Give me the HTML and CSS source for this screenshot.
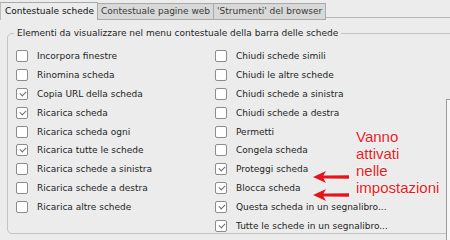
FILE: index.html
```html
<!DOCTYPE html>
<html lang="it">
<head>
  <meta charset="UTF-8" />
  <title>Contestuale schede</title>
  <link rel="stylesheet" href="styles.css">
</head>
<body>
  <div class="tabs">
    <div class="tab active">Contestuale schede</div>
    <div class="tab">Contestuale pagine web</div>
    <div class="tab">'Strumenti' del browser</div>
    <div class="tab-rest"></div>
  </div>

  <div class="panel">
    <fieldset class="group">
      <legend>Elementi da visualizzare nel menu contestuale della barra delle schede</legend>
      <div class="columns">
        <div class="col">
          <label class="item"><span class="box"></span>Incorpora finestre</label>
          <label class="item"><span class="box"></span>Rinomina scheda</label>
          <label class="item"><span class="box checked"></span>Copia URL della scheda</label>
          <label class="item"><span class="box checked"></span>Ricarica scheda</label>
          <label class="item"><span class="box"></span>Ricarica scheda ogni</label>
          <label class="item"><span class="box checked"></span>Ricarica tutte le schede</label>
          <label class="item"><span class="box"></span>Ricarica schede a sinistra</label>
          <label class="item"><span class="box"></span>Ricarica schede a destra</label>
          <label class="item"><span class="box"></span>Ricarica altre schede</label>
        </div>
        <div class="col">
          <label class="item"><span class="box"></span>Chiudi schede simili</label>
          <label class="item"><span class="box"></span>Chiudi le altre schede</label>
          <label class="item"><span class="box"></span>Chiudi schede a sinistra</label>
          <label class="item"><span class="box"></span>Chiudi schede a destra</label>
          <label class="item"><span class="box"></span>Permetti</label>
          <label class="item"><span class="box"></span>Congela scheda</label>
          <label class="item"><span class="box checked"></span>Proteggi scheda</label>
          <label class="item"><span class="box checked"></span>Blocca scheda</label>
          <label class="item"><span class="box checked"></span>Questa scheda in un segnalibro...</label>
          <label class="item"><span class="box checked"></span>Tutte le schede in un segnalibro...</label>
        </div>
      </div>
    </fieldset>

    <div class="scroll-edge"></div>

    <!-- annotation pasted on top of the screenshot -->
    <div class="arrows">
      <svg width="38" height="14" viewBox="0 0 38 14"><path d="M1 7 L14 1 L11.5 5.4 L37 5.2 L37 8.8 L11.5 8.6 L14 13 Z" fill="#e8141c"/></svg>
      <svg width="38" height="14" viewBox="0 0 38 14"><path d="M1 7 L14 1 L11.5 5.4 L37 5.2 L37 8.8 L11.5 8.6 L14 13 Z" fill="#e8141c"/></svg>
    </div>
    <div class="note-text">Vanno<br>attivati<br>nelle<br>impostazioni</div>
  </div>
</body>
</html>
```

FILE: styles.css
```css
* {
  box-sizing: border-box;
}
body {
  margin: 0;
  background: #ececec;
  font-family: "DejaVu Sans", "Liberation Sans", sans-serif;
  font-size: 9px;
  color: #1e1e1e;
  width: 450px;
  height: 240px;
  overflow: hidden;
}
/* Tab strip */
.tabs {
  display: flex;
  align-items: flex-end;
  height: 20px;
  padding-top: 2px;
}
.tab {
  height: 17px;
  padding: 0 3px;
  line-height: 15px;
  border: 1px solid #a9a9a9;
  border-left: none;
  background: #d8d8d8;
  color: #3a3a3a;
  white-space: nowrap;
}
.tab.active {
  height: 18px;
  padding: 0 3px 0 4px;
  background: #ececec;
  color: #111;
  border-bottom: none;
  border-left: 1px solid #bdbdbd;
  line-height: 16px;
}
.tab-rest {
  flex: 1;
  height: 1px;
  background: #b8b8b8;
  margin-bottom: 2px;
}
/* Panel */
.panel {
  position: relative;
  height: 220px;
}
.group {
  margin: 8px -20px 0 7px;
  padding: 9px 0 0 8px;
  border: 1px solid #c4c4c4;
  border-radius: 5px;
  height: 206px;
}
.group legend {
  padding: 0 3px;
  margin-left: -2px;
  color: #1e1e1e;
}
.columns {
  display: grid;
  grid-template-columns: 199px 220px;
}
.item {
  display: flex;
  align-items: center;
  height: 18.8px;
  white-space: nowrap;
}
.box {
  width: 12px;
  height: 12px;
  margin-right: 9px;
  border: 1px solid #8c8c8c;
  border-radius: 2px;
  background: #fff;
  position: relative;
  flex: none;
}
.box.checked::after {
  content: "";
  position: absolute;
  left: 3px;
  top: 2px;
  width: 5px;
  height: 3px;
  border-left: 1.3px solid #6d6d6d;
  border-bottom: 1.3px solid #6d6d6d;
  transform: rotate(-45deg);
}
.scroll-edge {
  position: absolute;
  left: 446px;
  top: 71px;
  width: 6px;
  height: 160px;
  border: 1px solid #9a9a9a;
  background: #f7f7f7;
}
/* Red annotation */
.arrows {
  position: absolute;
  left: 312px;
  top: 142px;
  display: flex;
  flex-direction: column;
  gap: 4px;
  filter: drop-shadow(0 0 1px #fff);
}
.arrows svg {
  display: block;
}
.note-text {
  position: absolute;
  left: 356px;
  top: 100px;
  font-family: "Liberation Sans", sans-serif;
  font-size: 15px;
  line-height: 17px;
  color: #ec1820;
  text-shadow: 0 0 2px #fff, 0 0 2px #fff;
}
```
